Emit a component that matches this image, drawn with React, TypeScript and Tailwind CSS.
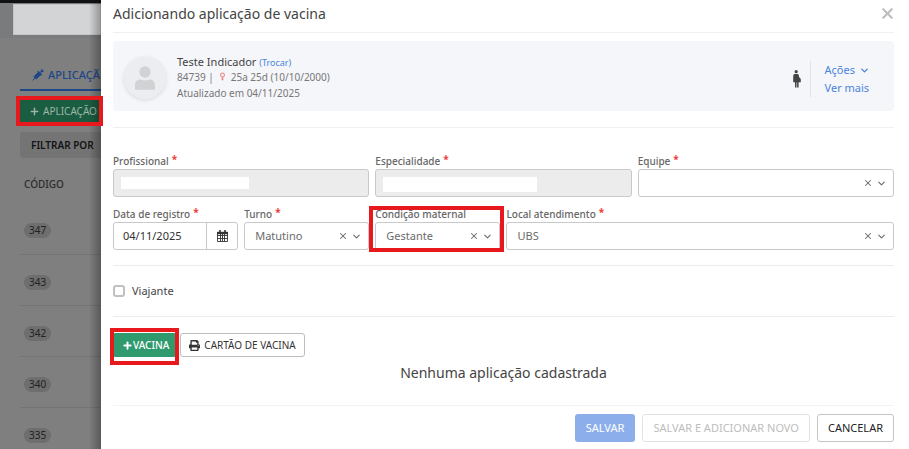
import { useState } from 'react'
import type { ReactNode } from 'react'
import { ChevronDown, Plus, X } from 'lucide-react'
import { FaPrint, FaVenus } from 'react-icons/fa'

const codes = ['347', '343', '342', '340', '335']

function Label({ htmlFor, required, children }: { htmlFor: string; required?: boolean; children: ReactNode }) {
  return (
    <label htmlFor={htmlFor} className="flex h-4 items-center gap-[3px] whitespace-nowrap text-[10px] font-medium text-[#666]">
      {children}
      {required && <span className="-mt-1 text-[10px] font-bold text-[#f03a36]">*</span>}
    </label>
  )
}

function MaskedField({ id, label, children }: { id: string; label: string; children: ReactNode }) {
  return (
    <div className="col-span-2">
      <Label htmlFor={id} required>{label}</Label>
      <div className="relative">
        <input id={id} disabled className="block h-7 w-full rounded-[3px] border border-[#c9c9c9] bg-[#ececec] px-2 text-[11px]" />
        {children}
      </div>
    </div>
  )
}

function SelectField({ id, label, required, initial, className }: {
  id: string
  label: string
  required?: boolean
  initial: string
  className?: string
}) {
  const [value, setValue] = useState(initial)

  return (
    <div className={className}>
      <Label htmlFor={id} required={required}>{label}</Label>
      <div className="flex h-7 items-center rounded-[3px] border border-[#c9c9c9] bg-white pr-1.5 text-[#6b6b6b]">
        <select
          id={id}
          value={value}
          onChange={(e) => setValue(e.target.value)}
          className="h-full min-w-0 flex-1 appearance-none bg-transparent pl-2.5 text-[11px] outline-none"
        >
          <option value=""></option>
          {initial && <option value={initial}>{initial}</option>}
        </select>
        <button type="button" aria-label="Limpar" onClick={() => setValue('')} className="mr-[3px]">
          <X size={10} strokeWidth={2.5} />
        </button>
        <ChevronDown size={11} strokeWidth={2.5} />
      </div>
    </div>
  )
}

function PregnantIcon() {
  return (
    <svg viewBox="0 0 8 18" className="h-[18px] w-2" fill="#444">
      <circle cx="3.2" cy="1.7" r="1.6" />
      <path d="M1.8 4h2.4c1 0 1.5.7 1.7 1.6l.2 1.6c1.1.5 1.7 1.5 1.7 2.7v2.4H5.6v5.1H4.1v-4.8h-.6v4.8H2v-5.2H.2V6.3C.2 5 .7 4 1.8 4z" />
    </svg>
  )
}

function AvatarIcon() {
  return (
    <svg viewBox="0 0 20 24" className="h-6 w-5" fill="#d1d2d4">
      <circle cx="10" cy="6" r="5.7" />
      <path d="M0 23v-3c0-4 2-6.4 5-6.4 1.6 0 2.6 1 5 1s3.4-1 5-1c3 0 5 2.4 5 6.4v3c0 .5-.4.8-1 .8H1c-.6 0-1-.3-1-.8z" />
    </svg>
  )
}

function CalendarIcon() {
  return (
    <svg viewBox="0 0 11 12" className="h-3 w-[11px]" fill="none" stroke="#333">
      <path d="M.5 3v8.5h10V3M.5 5.5h10M.5 8.5h10M3.5 4v7.5M5.5 4v7.5M7.5 4v7.5" strokeWidth=".9" />
      <path d="M0 3h11" strokeWidth="2.4" />
      <path d="M3 0v3M8 0v3" strokeWidth="1.6" />
    </svg>
  )
}

function SyringeIcon() {
  return (
    <svg viewBox="0 0 12 12" className="mt-[3px] size-3 shrink-0" fill="none" stroke="currentColor">
      <path d="M.6 11.4 3 9" strokeWidth="1" />
      <path d="M2.8 9.2 8 4" strokeWidth="4" />
      <path d="M5.8 2.2 9.8 6.2" strokeWidth="1.3" />
      <path d="M8.4 3.6l2-2M9.2.6l2.2 2.2" strokeWidth="1.4" />
    </svg>
  )
}

function Background() {
  return (
    <aside className="relative w-[101px] shrink-0 bg-[#7f7f7f]">
      <div className="h-full overflow-hidden">
        <div className="h-[38px] border-t-[3px] border-[#111214] bg-[#797b7d] pt-px pl-[13px]">
          <div className="h-[31px] border border-[#c4c6c8] bg-[#d3d4d6]" />
        </div>
        <div className="pt-6 pl-5">
          <a href="#aplicacao" className="flex h-[29px] items-start gap-1 border-b-2 border-[#1d4787] pt-1 pl-3 text-[11px] font-medium whitespace-nowrap text-[#1d4787]">
            <SyringeIcon />
            <span className="leading-[18px]">APLICAÇÃ</span>
          </a>
          <button type="button" className="mt-2 flex h-6 w-full items-center gap-[3px] rounded-l-[2px] bg-[#1a5d41] pl-[9px] text-[10px] whitespace-nowrap text-[#9fb5aa]">
            <Plus size={11} strokeWidth={3} className="shrink-0" />
            APLICAÇÃO
          </button>
          <button type="button" className="mt-[9px] flex h-[26px] w-full items-center rounded-l-[3px] bg-[#747474] pl-[11px] text-[10px] font-semibold whitespace-nowrap text-[#151515]">
            FILTRAR POR
          </button>
          <table className="mt-[13px] w-full">
            <thead>
              <tr className="h-8 align-top">
                <th className="pt-1.5 pl-1 text-left text-[10px] font-medium text-[#2c2c2c]">CÓDIGO</th>
              </tr>
            </thead>
            <tbody>
              {codes.map((code) => (
                <tr key={code} className="h-[51px] border-b border-[#747474]">
                  <td className="pl-1">
                    <span className="inline-block rounded-full bg-[#6e6e6e] px-[5px] text-[10px] leading-[15px] text-[#222]">{code}</span>
                  </td>
                </tr>
              ))}
            </tbody>
          </table>
        </div>
      </div>
      <div className="pointer-events-none absolute inset-y-0 right-0 w-3 bg-linear-to-r from-transparent to-black/30" />
      <div className="pointer-events-none absolute top-24 -right-0.5 left-4 z-10 h-[30px] border-4 border-[#e8191d]" />
    </aside>
  )
}

export default function App() {
  const [traveler, setTraveler] = useState(false)

  return (
    <div className="flex font-['Noto_Sans',sans-serif] text-[#444]">
      <Background />
      <main className="min-w-0 flex-1 bg-white pr-[15px] pb-1.5 pl-3">
        <header className="flex h-[33px] items-center justify-between border-b border-[#f0f0f0] pb-1.5">
          <h1 className="text-[14px]">Adicionando aplicação de vacina</h1>
          <button type="button" aria-label="Fechar" className="-mr-0.5 text-[#bdbdbd]">
            <X size={17} strokeWidth={3} />
          </button>
        </header>

        <section className="mt-2 flex h-[70px] items-center rounded-[4px] bg-[#f5f6fa] pr-6 pl-[11px]">
          <div className="mt-1 flex size-[42px] items-center justify-center rounded-full bg-[#ecedf0] shadow-[0_1px_4px_rgba(0,0,0,0.12)]">
            <AvatarIcon />
          </div>
          <div className="mt-1 ml-[11px] text-[10px] whitespace-nowrap text-[#777]">
            <h2 className="text-[11px] leading-[14px] text-[#444]">
              Teste Indicador <a href="#trocar" className="text-[9px] text-[#4a84dc]">(Trocar)</a>
            </h2>
            <p className="flex items-center leading-[14px]">
              84739 | <FaVenus size={9} className="mx-1 text-[#f08f8f]" /> 25a 25d (10/10/2000)
            </p>
            <p className="leading-[18px]">Atualizado em 04/11/2025</p>
          </div>
          <div className="mt-1.5 ml-auto flex items-center gap-[9px]">
            <PregnantIcon />
            <div className="flex flex-col items-start border-l border-[#dfe1e6] pl-3.5 text-[11px] leading-[18px] text-[#4a84dc]">
              <button type="button" className="flex items-center gap-1">
                Ações <ChevronDown size={11} strokeWidth={3} />
              </button>
              <a href="#mais">Ver mais</a>
            </div>
          </div>
        </section>

        <form className="mt-4 border-t border-[#f0f0f0] pt-[25px]" onSubmit={(e) => e.preventDefault()}>
          <div className="grid grid-cols-6 gap-x-1.5 gap-y-[9px]">
            <MaskedField id="profissional" label="Profissional">
              <div className="absolute top-2 left-2 h-3 w-1/2 bg-white" />
            </MaskedField>
            <MaskedField id="especialidade" label="Especialidade">
              <div className="absolute top-2 left-2 h-[15px] w-3/5 bg-white" />
            </MaskedField>
            <SelectField id="equipe" label="Equipe" required initial="" className="col-span-2" />

            <div>
              <Label htmlFor="data" required>Data de registro</Label>
              <div className="flex h-7 rounded-[3px] border border-[#c9c9c9]">
                <input id="data" defaultValue="04/11/2025" className="min-w-0 flex-1 pl-[9px] text-[11px] text-[#333] outline-none" />
                <button type="button" aria-label="Abrir calendário" className="flex w-[31px] items-center justify-center border-l border-[#c9c9c9]">
                  <CalendarIcon />
                </button>
              </div>
            </div>
            <SelectField id="turno" label="Turno" required initial="Matutino" />
            <div className="relative">
              <SelectField id="condicao" label="Condição maternal" initial="Gestante" />
              <div className="pointer-events-none absolute top-0 -right-1 -bottom-0.5 -left-1.5 border-4 border-[#e8191d]" />
            </div>
            <SelectField id="local" label="Local atendimento" required initial="UBS" className="col-span-3" />
          </div>

          <div className="mt-[15px] flex h-[52px] items-center border-y border-[#ececec]">
            <label className="flex items-center gap-[7px] text-[11px]">
              <input
                type="checkbox"
                checked={traveler}
                onChange={(e) => setTraveler(e.target.checked)}
                className="size-3 appearance-none rounded-[3px] border-2 border-[#c0c0c0] bg-white checked:bg-[#4a84dc]"
              />
              Viajante
            </label>
          </div>

          <div className="mt-4 flex gap-1 text-[10px]">
            <div className="relative">
              <button type="button" className="flex h-6 items-center rounded-[2px] bg-[#2f9a6e] pr-[7px] pl-[9px] font-medium text-white">
                <Plus size={11} strokeWidth={4} /> VACINA
              </button>
              <div className="pointer-events-none absolute -inset-x-[3px] -top-[5px] -bottom-2 border-4 border-[#e8191d]" />
            </div>
            <button type="button" className="flex h-6 items-center gap-1 rounded-[3px] border border-[#bdbdbd] px-2 text-[#333]">
              <FaPrint size={11} /> CARTÃO DE VACINA
            </button>
          </div>

          <p className="mt-1.5 text-center text-[14px] leading-5">Nenhuma aplicação cadastrada</p>

          <footer className="mt-[22px] flex justify-end gap-[7px] border-t border-[#f3f3f3] pt-2 text-[11px]">
            <button type="submit" className="h-7 rounded-[3px] bg-[#8cafec] px-[11px] text-white">SALVAR</button>
            <button type="button" disabled className="h-7 rounded-[3px] border border-[#e3e3e3] px-2.5 text-[#bdbdbd]">SALVAR E ADICIONAR NOVO</button>
            <button type="button" className="h-7 rounded-[3px] border border-[#c4c4c4] px-2.5 text-[#222]">CANCELAR</button>
          </footer>
        </form>
      </main>
    </div>
  )
}
